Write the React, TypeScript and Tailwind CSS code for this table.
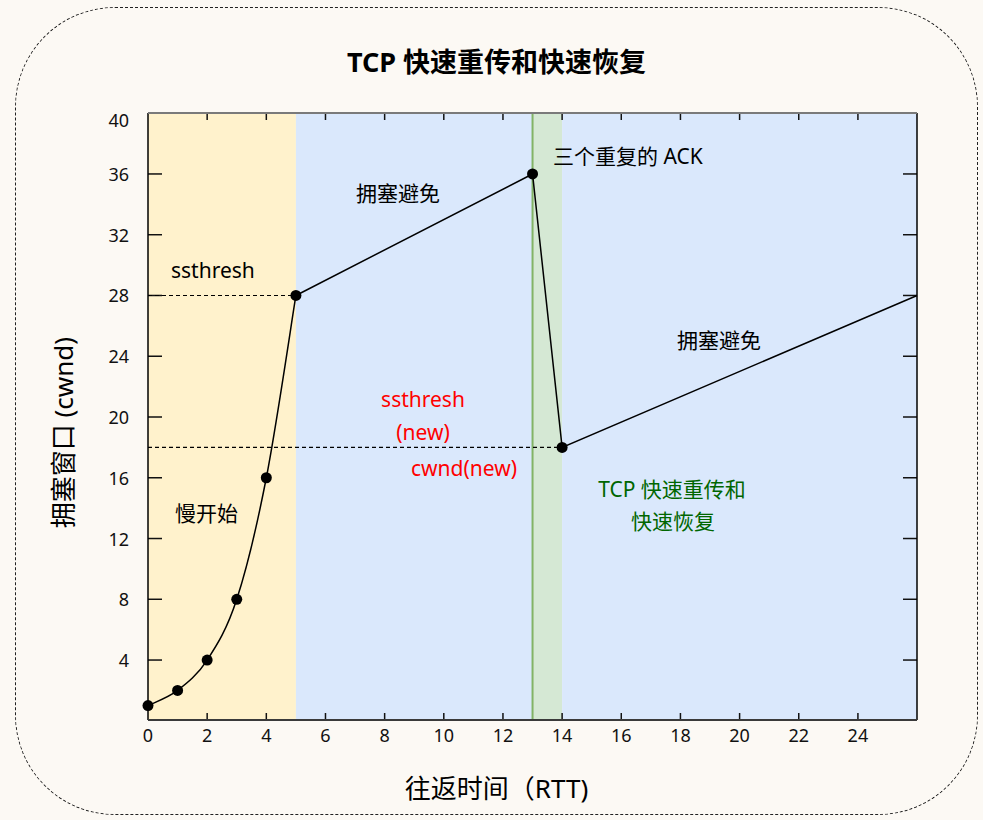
import React from "react";

const X = (u: number) => 148 + u * 29.58;
const Y = (v: number) => 720.8 - v * 15.19;

const FONT = '"Noto Sans", "Noto Sans CJK SC", sans-serif';

function smoothPath(pts: [number, number][]) {
  const p = pts.map(([u, v]) => [X(u), Y(v)]);
  let d = `M ${p[0][0]} ${p[0][1]}`;
  for (let i = 0; i < p.length - 1; i++) {
    const p0 = p[Math.max(i - 1, 0)];
    const p1 = p[i];
    const p2 = p[i + 1];
    const p3 = p[Math.min(i + 2, p.length - 1)];
    const c1x = p1[0] + (p2[0] - p0[0]) / 6;
    const c1y = p1[1] + (p2[1] - p0[1]) / 6;
    const c2x = p2[0] - (p3[0] - p1[0]) / 6;
    const c2y = p2[1] - (p3[1] - p1[1]) / 6;
    d += ` C ${c1x} ${c1y} ${c2x} ${c2y} ${p2[0]} ${p2[1]}`;
  }
  return d;
}

const slow: [number, number][] = [
  [0, 1],
  [1, 2],
  [2, 4],
  [3, 8],
  [4, 16],
  [5, 28],
];

const dots: [number, number][] = [...slow, [13, 36], [14, 18]];

const yTicks = [4, 8, 12, 16, 20, 24, 28, 32, 36];
const xTicks = [2, 4, 6, 8, 10, 12, 14, 16, 18, 20, 22, 24];
const xLabels = [0, 2, 4, 6, 8, 10, 12, 14, 16, 18, 20, 22, 24];

function Chart() {
  const L = 148;
  const R = 917;
  const T = 113;
  const B = 720;
  return (
    <svg width={835} height={650} viewBox="100 100 835 650" className="block shrink-0">
      <rect x={L} y={T} width={X(5) - L} height={B - T} fill="#fff2cc" />
      <rect x={X(5)} y={T} width={X(13) - X(5)} height={B - T} fill="#dae8fc" />
      <rect x={X(13)} y={T} width={X(14) - X(13)} height={B - T} fill="#d5e8d4" />
      <rect x={X(14)} y={T} width={R - X(14)} height={B - T} fill="#dae8fc" />
      <line x1={X(13)} y1={T} x2={X(13)} y2={B} stroke="#82b366" strokeWidth={2} />

      {/* ticks */}
      {yTicks.map((v) => (
        <g key={v}>
          <line x1={L} y1={Y(v)} x2={L + 14} y2={Y(v)} stroke="#111" strokeWidth={1.5} />
          <line x1={R - 14} y1={Y(v)} x2={R} y2={Y(v)} stroke="#111" strokeWidth={1.5} />
        </g>
      ))}
      {xTicks.map((u) => (
        <g key={u}>
          <line x1={X(u)} y1={T} x2={X(u)} y2={T + 7} stroke="#111" strokeWidth={1.5} />
          <line x1={X(u)} y1={B} x2={X(u)} y2={B - 7} stroke="#111" strokeWidth={1.5} />
        </g>
      ))}

      {/* frame */}
      <line x1={L} y1={T} x2={L} y2={B} stroke="#000" strokeWidth={1.5} />
      <line x1={R} y1={T} x2={R} y2={B} stroke="#000" strokeWidth={1.5} />
      <line x1={L} y1={T} x2={R} y2={T} stroke="#7a7a7a" strokeWidth={2} />
      <line x1={L} y1={B} x2={R} y2={B} stroke="#3a3a3a" strokeWidth={2} />

      {/* dashed thresholds */}
      <line x1={L} y1={Y(28)} x2={X(5)} y2={Y(28)} stroke="#000" strokeWidth={1.2} strokeDasharray="4 3" />
      <line x1={L} y1={Y(18)} x2={X(14)} y2={Y(18)} stroke="#000" strokeWidth={1.2} strokeDasharray="4 3" />

      {/* curve */}
      <path d={smoothPath(slow)} fill="none" stroke="#000" strokeWidth={1.5} />
      <polyline
        points={`${X(5)},${Y(28)} ${X(13)},${Y(36)} ${X(14)},${Y(18)} ${X(26)},${Y(28)}`}
        fill="none"
        stroke="#000"
        strokeWidth={1.5}
      />
      {dots.map(([u, v]) => (
        <circle key={`${u}-${v}`} cx={X(u)} cy={Y(v)} r={5.5} fill="#000" />
      ))}

      {/* tick labels */}
      <g fontFamily={FONT} fontSize={18} fill="#111">
        <text x={129} y={120} textAnchor="end" dominantBaseline="central">
          40
        </text>
        {yTicks.map((v) => (
          <text key={v} x={129} y={Y(v)} textAnchor="end" dominantBaseline="central">
            {v}
          </text>
        ))}
        {xLabels.map((u) => (
          <text key={u} x={X(u)} y={735} textAnchor="middle" dominantBaseline="central">
            {u}
          </text>
        ))}
      </g>

      {/* annotations */}
      <g fontFamily={FONT} fontSize={21} dominantBaseline="central">
        <text x={171} y={270} fill="#000">ssthresh</text>
        <text x={356} y={193} fill="#000">拥塞避免</text>
        <text x={553} y={156} fill="#000">三个重复的 ACK</text>
        <text x={677} y={340} fill="#000">拥塞避免</text>
        <text x={175} y={513} fill="#000">慢开始</text>
        <text x={423} y={399} fill="#ff0000" textAnchor="middle">ssthresh</text>
        <text x={423} y={432} fill="#ff0000" textAnchor="middle">(new)</text>
        <text x={464} y={468} fill="#ff0000" textAnchor="middle">cwnd(new)</text>
        <text x={672} y={489} fill="#006600" textAnchor="middle">TCP 快速重传和</text>
        <text x={673} y={521} fill="#006600" textAnchor="middle">快速恢复</text>
      </g>
    </svg>
  );
}

export default function App() {
  return (
    <div className="w-[983px] h-[820px] bg-[#fcf9f4] pt-[7px] pl-[15px] overflow-hidden">
      <div
        className="w-[963px] h-[808px] border border-dashed border-[#222] rounded-[100px] flex flex-col items-center"
        style={{ fontFamily: FONT }}
      >
        <div className="mt-[36px] h-[36px] leading-[36px] text-[27px] font-bold text-black">
          TCP 快速重传和快速恢复
        </div>
        <div className="mt-[20px] self-stretch flex h-[650px]">
          <div className="w-[84px] pl-[10px] pt-[16px] flex items-center justify-center">
            <div className="[writing-mode:vertical-rl] [text-orientation:sideways] rotate-180 text-[26px] leading-[30px] text-black whitespace-nowrap">
              拥塞窗口 (cwnd)
            </div>
          </div>
          <Chart />
        </div>
        <div className="mt-[20px] h-[36px] leading-[36px] text-[26px] text-black">往返时间（RTT)</div>
      </div>
    </div>
  );
}
